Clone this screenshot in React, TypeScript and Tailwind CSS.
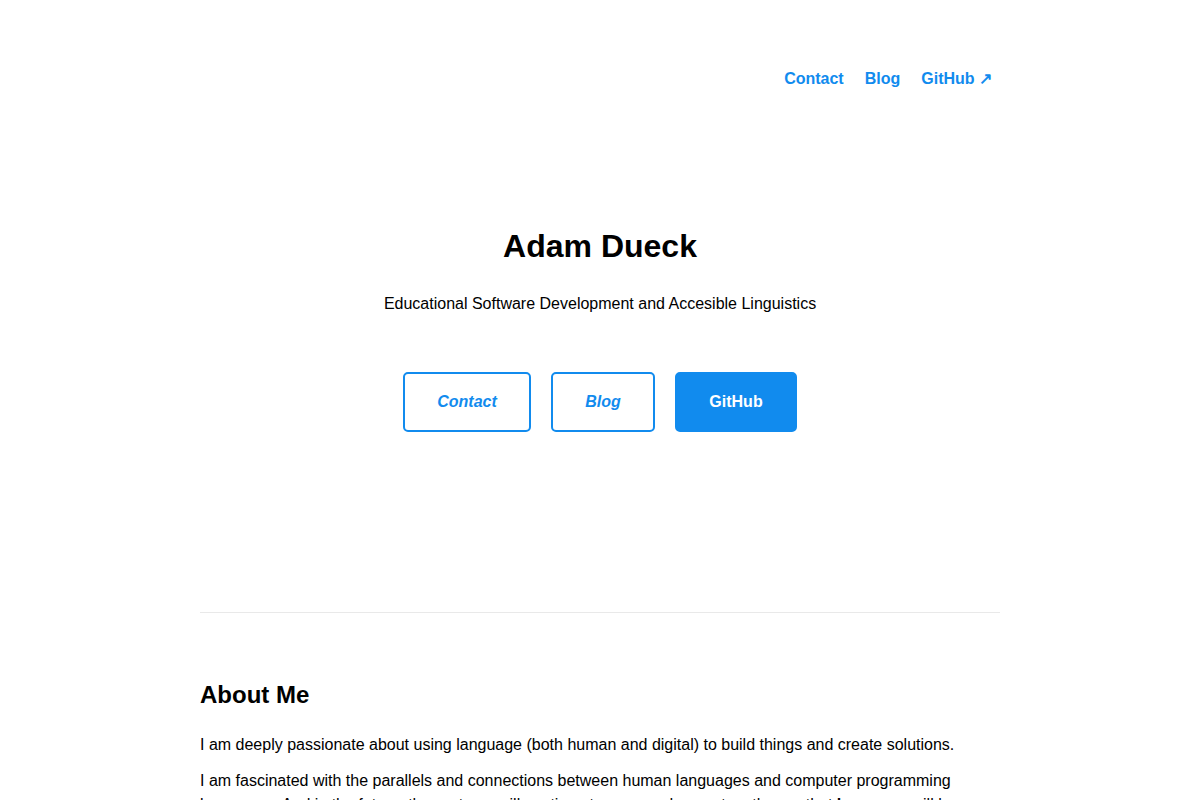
import React from 'react';

const font = { fontFamily: '"Liberation Sans", Arial, sans-serif' };

export default function App() {
  return (
    <div className="min-h-screen bg-white text-black" style={font}>
      <div className="mx-auto w-[800px]">
        {/* Header nav */}
        <header className="pt-[67px]">
          <nav className="flex justify-end text-base font-bold leading-6 text-[#118bee]">
            <a href="#contact" className="mx-2">Contact</a>
            <a href="#blog" className="ml-[13px] mr-2">Blog</a>
            <a href="#github" className="ml-[13px] mr-2">GitHub ↗</a>
          </nav>

          {/* Hero */}
          <div className="mt-[131px] text-center">
            <h1 className="text-[32px] font-bold leading-[48px]">Adam Dueck</h1>
            <p className="mt-[22px] text-base leading-6">
              Educational Software Development and Accesible Linguistics
            </p>
            <div className="mt-[56px] flex justify-center gap-5">
              <a
                href="#contact"
                className="h-[60px] w-[128px] rounded-[5px] border-2 border-[#118bee] py-4 text-center text-base font-bold italic leading-6 text-[#118bee]"
              >
                Contact
              </a>
              <a
                href="#blog"
                className="h-[60px] w-[104px] rounded-[5px] border-2 border-[#118bee] py-4 text-center text-base font-bold italic leading-6 text-[#118bee]"
              >
                Blog
              </a>
              <a
                href="#github"
                className="h-[60px] w-[122px] rounded-[5px] border-2 border-[#118bee] bg-[#118bee] py-4 text-center text-base font-bold leading-6 text-white"
              >
                GitHub
              </a>
            </div>
          </div>
        </header>

        <hr className="mt-[180px] h-px border-0 bg-[#e9e9e9]" />

        {/* About */}
        <section className="mt-16">
          <h2 className="text-2xl font-bold leading-9">About Me</h2>
          <p className="mt-5 text-base leading-6">
            I am deeply passionate about using language (both human and digital) to build things and create solutions.
          </p>
          <p className="mt-3 text-base leading-6">
            I am fascinated with the parallels and connections between human languages and computer programming
            languages. And in the future, the systems will continue to grow and come together so that{' '}
            <b>language</b> will be a bridge between people and technology.
          </p>
        </section>
      </div>
    </div>
  );
}
